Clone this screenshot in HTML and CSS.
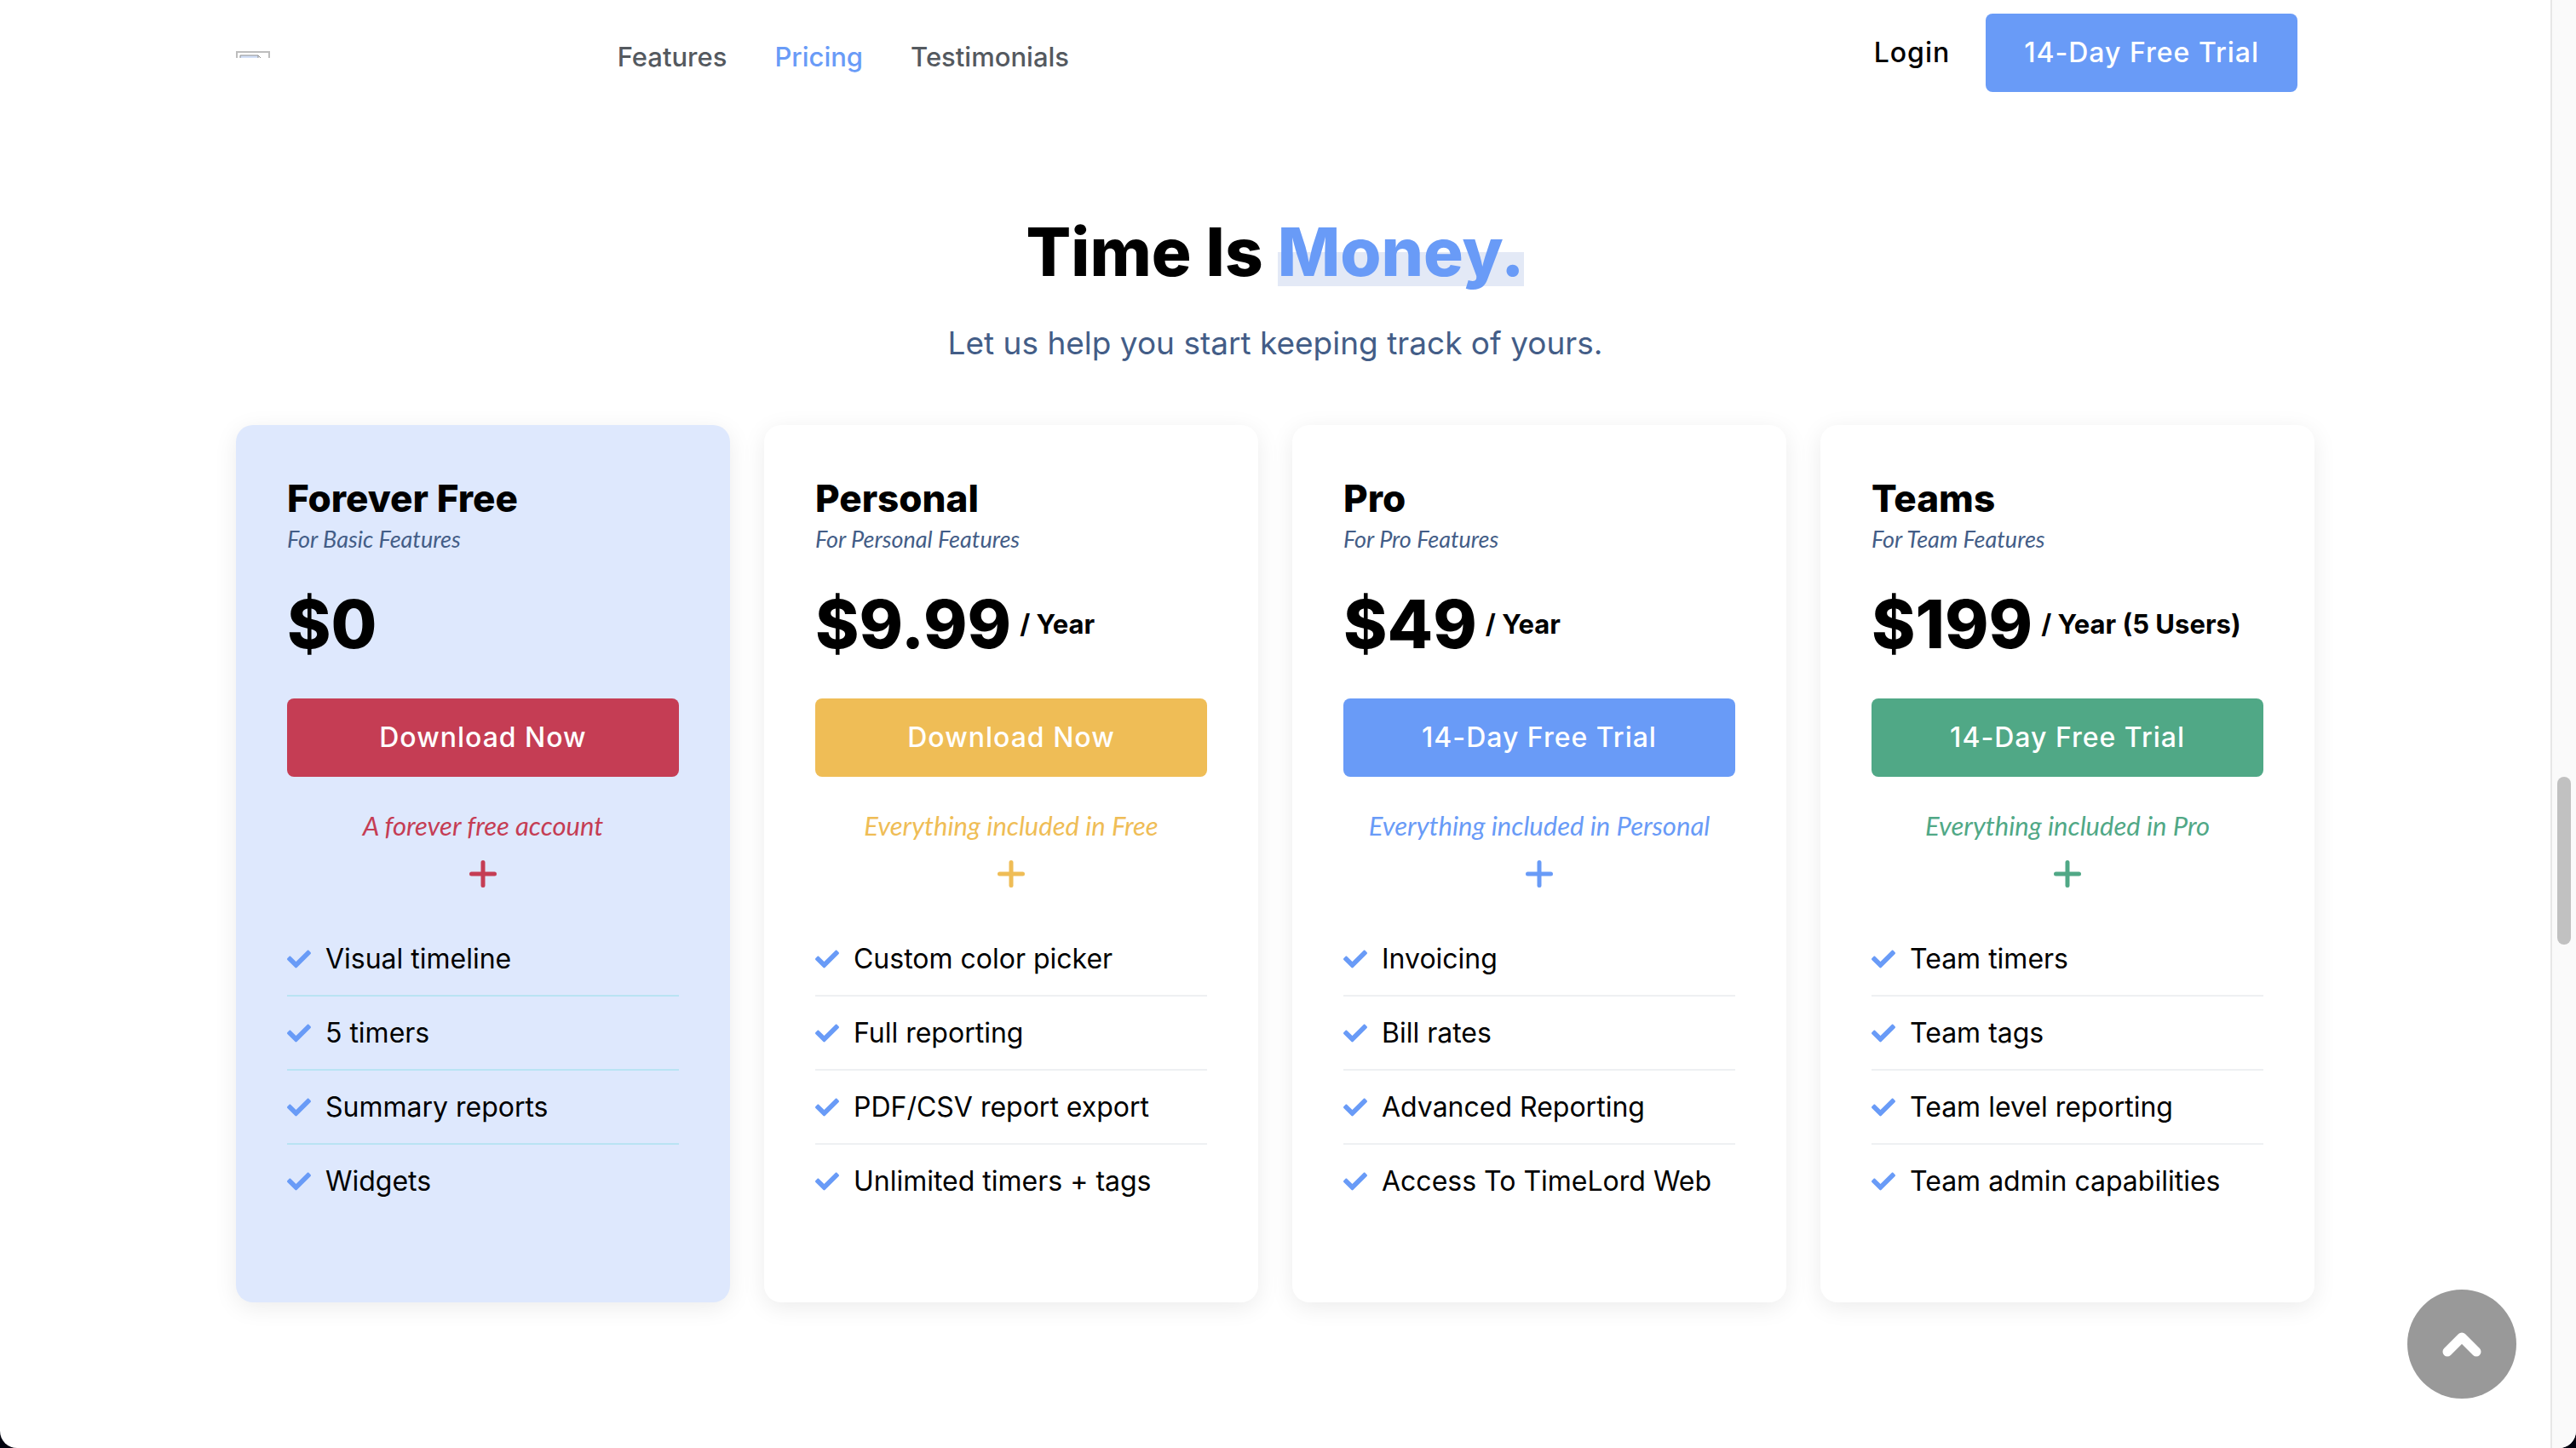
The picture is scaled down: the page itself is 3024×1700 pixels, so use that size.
FILE: index.html
```html
<!DOCTYPE html>
<html lang="en">
<head>
    <meta charset="UTF-8">
    <meta name="viewport" content="width=device-width, initial-scale=1.0">
    <title>TimeLord Pricing</title>
    <link rel="stylesheet" href="styles.css">
</head>
<body>
    <svg class="sprite" aria-hidden="true">
        <symbol id="check" viewBox="0 0 512 512">
            <path d="M173.898 439.404l-166.4-166.4c-9.997-9.997-9.997-26.206 0-36.204l36.203-36.204c9.997-9.998 26.207-9.998 36.204 0L192 312.69 432.095 72.596c9.997-9.997 26.207-9.997 36.204 0l36.203 36.204c9.997 9.997 9.997 26.206 0 36.204l-294.4 294.401c-9.998 9.997-26.207 9.997-36.204-.001z"/>
        </symbol>
        <symbol id="plus" viewBox="0 0 32 32">
            <path d="M16 2.5v27M2.5 16h27" stroke="currentColor" stroke-width="5" stroke-linecap="round"/>
        </symbol>
    </svg>

    <div class="window">
        <div class="page">
            <header class="container header">
                <a href="#" class="logo" aria-label="Home">
                    <svg width="40" height="8" viewBox="0 0 40 8">
                        <path d="M1 8V1h38v7" fill="none" stroke="#bdbdbd" stroke-width="2"/>
                        <path d="M5 8V5h21v3z" fill="#d3e0f7"/>
                        <path d="M5 8V5h21l4 4M26 5v3" fill="none" stroke="#8f8f8f"/>
                    </svg>
                </a>
                <nav class="nav">
                    <a href="#features">Features</a>
                    <a href="#pricing" class="active">Pricing</a>
                    <a href="#testimonials">Testimonials</a>
                </nav>
                <div class="actions">
                    <a href="#login" class="login">Login</a>
                    <button class="btn blue">14-Day Free Trial</button>
                </div>
            </header>

            <main class="container" id="pricing">
                <h1>Time Is <span class="highlight">Money.</span></h1>
                <p class="lead">Let us help you start keeping track of yours.</p>

                <div class="plans">
                    <section class="card red featured">
                        <h2>Forever Free</h2>
                        <p class="subtitle">For Basic Features</p>
                        <p class="price">$0</p>
                        <button class="btn">Download Now</button>
                        <p class="note">A forever free account</p>
                        <svg class="plus"><use href="#plus"/></svg>
                        <ul>
                            <li><svg class="check"><use href="#check"/></svg>Visual timeline</li>
                            <li><svg class="check"><use href="#check"/></svg>5 timers</li>
                            <li><svg class="check"><use href="#check"/></svg>Summary reports</li>
                            <li><svg class="check"><use href="#check"/></svg>Widgets</li>
                        </ul>
                    </section>

                    <section class="card yellow">
                        <h2>Personal</h2>
                        <p class="subtitle">For Personal Features</p>
                        <p class="price">$9.99 <span class="period">/ Year</span></p>
                        <button class="btn">Download Now</button>
                        <p class="note">Everything included in Free</p>
                        <svg class="plus"><use href="#plus"/></svg>
                        <ul>
                            <li><svg class="check"><use href="#check"/></svg>Custom color picker</li>
                            <li><svg class="check"><use href="#check"/></svg>Full reporting</li>
                            <li><svg class="check"><use href="#check"/></svg>PDF/CSV report export</li>
                            <li><svg class="check"><use href="#check"/></svg>Unlimited timers + tags</li>
                        </ul>
                    </section>

                    <section class="card blue">
                        <h2>Pro</h2>
                        <p class="subtitle">For Pro Features</p>
                        <p class="price">$49 <span class="period">/ Year</span></p>
                        <button class="btn">14-Day Free Trial</button>
                        <p class="note">Everything included in Personal</p>
                        <svg class="plus"><use href="#plus"/></svg>
                        <ul>
                            <li><svg class="check"><use href="#check"/></svg>Invoicing</li>
                            <li><svg class="check"><use href="#check"/></svg>Bill rates</li>
                            <li><svg class="check"><use href="#check"/></svg>Advanced Reporting</li>
                            <li><svg class="check"><use href="#check"/></svg>Access To TimeLord Web</li>
                        </ul>
                    </section>

                    <section class="card green">
                        <h2>Teams</h2>
                        <p class="subtitle">For Team Features</p>
                        <p class="price">$199 <span class="period">/ Year (5 Users)</span></p>
                        <button class="btn">14-Day Free Trial</button>
                        <p class="note">Everything included in Pro</p>
                        <svg class="plus"><use href="#plus"/></svg>
                        <ul>
                            <li><svg class="check"><use href="#check"/></svg>Team timers</li>
                            <li><svg class="check"><use href="#check"/></svg>Team tags</li>
                            <li><svg class="check"><use href="#check"/></svg>Team level reporting</li>
                            <li><svg class="check"><use href="#check"/></svg>Team admin capabilities</li>
                        </ul>
                    </section>
                </div>
            </main>
        </div>

        <div class="scrollbar"><div class="thumb"></div></div>
    </div>

    <button class="to-top" aria-label="Back to top">
        <svg width="46" height="30" viewBox="0 0 46 30">
            <path d="M6 24L23 7l17 17" fill="none" stroke="#fff" stroke-width="11" stroke-linecap="round" stroke-linejoin="round"/>
        </svg>
    </button>
</body>
</html>
```
FILE: styles.css
```css
* {
    box-sizing: border-box;
    margin: 0;
    padding: 0;
}

body {
    background: #02030f;
    color: #000;
    font-family: Inter, sans-serif;
    font-size: 32px;
}

a {
    color: inherit;
    text-decoration: none;
}

.sprite {
    display: none;
}

.window {
    display: flex;
    min-height: 100vh;
    background: #fff;
    border-radius: 0 0 20px 20px;
    overflow: hidden;
}

.page {
    flex: 1;
}

.container {
    width: 81.5%;
    margin: 0 auto;
}

/* Header */
.header {
    display: flex;
    align-items: center;
    height: 132px;
    padding-right: 20px;
}

.logo {
    flex: 0 0 18.5%;
    height: 12px;
}

.logo svg {
    display: block;
}

.nav {
    display: flex;
    gap: 56px;
    color: #54595f;
    font-size: 31px;
    font-weight: 500;
}

.nav .active {
    color: #699bf7;
}

.actions {
    display: flex;
    align-items: center;
    align-self: flex-start;
    gap: 42px;
    margin-left: auto;
    padding-top: 16px;
}

.login {
    padding-bottom: 2px;
    font-weight: 500;
    letter-spacing: 1px;
}

.btn {
    height: 92px;
    padding: 0 45px 2px;
    border: none;
    border-radius: 8px;
    background: var(--accent);
    color: #fff;
    font-family: inherit;
    font-size: 32px;
    font-weight: 500;
    letter-spacing: 1px;
    cursor: pointer;
}

/* Plan colors */
.red {
    --accent: #c53d54;
}

.yellow {
    --accent: #efbd56;
}

.blue {
    --accent: #699bf7;
}

.green {
    --accent: #50a886;
}

/* Heading */
h1 {
    margin-top: 124px;
    font-size: 78px;
    font-weight: 800;
    line-height: 80px;
    text-align: center;
}

.highlight {
    display: inline-block;
    background: linear-gradient(transparent 50%, #e3e9f6 50%);
    color: #699bf7;
}

.lead {
    margin-top: 37px;
    color: #435d87;
    font-size: 37px;
    line-height: 60px;
    text-align: center;
}

/* Plans */
.plans {
    display: grid;
    grid-template-columns: repeat(4, 1fr);
    gap: 40px;
    margin-top: 66px;
    padding-bottom: 60px;
}

.card {
    display: flex;
    flex-direction: column;
    padding: 60px;
    border-radius: 20px;
    background: #fff;
    box-shadow: 0 6px 28px rgba(0, 0, 0, 0.08);
}

.featured {
    background: #dee8fd;
}

.card h2 {
    font-size: 44px;
    font-weight: 800;
    line-height: 52px;
}

.subtitle {
    color: #435d87;
    font-family: Lato, sans-serif;
    font-size: 27px;
    font-style: italic;
    line-height: 44px;
}

.price {
    display: flex;
    align-items: center;
    gap: 10px;
    margin: 38px 0 47px;
    font-size: 78px;
    font-weight: 800;
    line-height: 80px;
}

.period {
    font-size: 31px;
    font-weight: 700;
}

.note {
    margin-top: 33px;
    color: var(--accent);
    font-family: Lato, sans-serif;
    font-size: 31px;
    font-style: italic;
    line-height: 48px;
    text-align: center;
}

.plus {
    align-self: center;
    width: 32px;
    height: 32px;
    margin: 17px 0 41px;
    color: var(--accent);
}

ul {
    margin-bottom: 40px;
    list-style: none;
}

li {
    display: flex;
    align-items: center;
    gap: 17px;
    border-bottom: 2px solid #eef0f2;
    line-height: 85px;
}

.featured li {
    border-color: #b9e3f3;
}

ul li:last-child {
    border: none;
}

.check {
    width: 28px;
    height: 28px;
    fill: #699bf7;
}

/* Scrollbar track */
.scrollbar {
    flex: 0 0 30px;
    padding: 912px 6px 0;
    border-left: 2px solid #e7e7e7;
    background: #fafafa;
}

.thumb {
    width: 16px;
    height: 197px;
    border-radius: 8px;
    background: #c1c1c1;
}

.to-top {
    position: fixed;
    right: 70px;
    bottom: 58px;
    display: flex;
    align-items: center;
    justify-content: center;
    width: 128px;
    height: 128px;
    border: none;
    border-radius: 50%;
    background: #999;
    cursor: pointer;
}
```
